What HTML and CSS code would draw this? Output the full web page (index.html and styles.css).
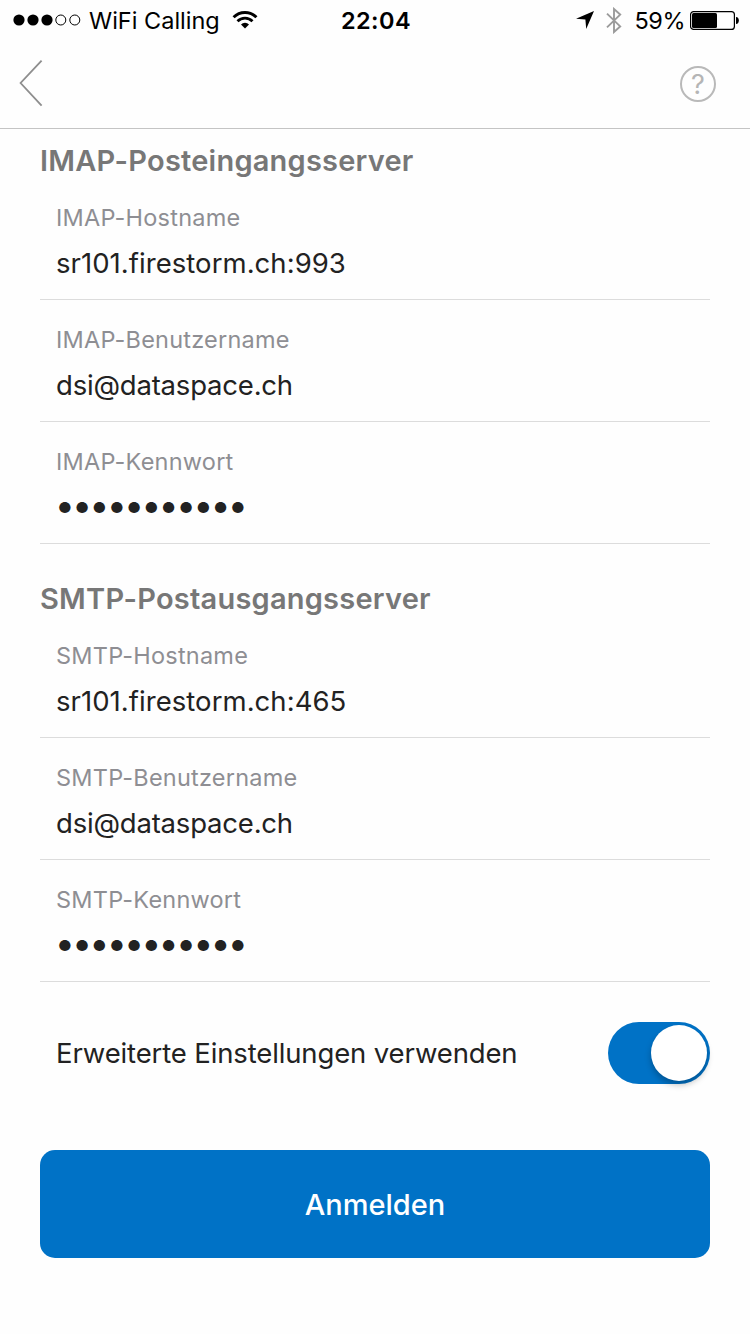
FILE: index.html
```
<!DOCTYPE html>
<html lang="de">
<head>
  <meta charset="UTF-8">
  <meta name="viewport" content="width=device-width, initial-scale=1.0">
  <title>Anmelden</title>
  <link rel="stylesheet" href="styles.css">
</head>

<body>
  <div class="status-bar">
    <div class="status-left">
      <svg class="signal" width="68" height="14" viewBox="0 0 68 14">
        <circle cx="6" cy="7" r="5.6"/>
        <circle cx="20" cy="7" r="5.6"/>
        <circle cx="34" cy="7" r="5.6"/>
        <circle cx="47.8" cy="7" r="5" fill="none" stroke="#000" stroke-width="1"/>
        <circle cx="61.8" cy="7" r="5" fill="none" stroke="#000" stroke-width="1"/>
      </svg>
      <span class="carrier">WiFi Calling</span>
      <svg class="wifi" width="26" height="20" viewBox="0 0 26 20">
        <path d="M1.6 7.2 A16.2 16.2 0 0 1 24.4 7.2" fill="none" stroke="#000" stroke-width="3"/>
        <path d="M5.5 11.2 A10.6 10.6 0 0 1 20.5 11.2" fill="none" stroke="#000" stroke-width="2.8"/>
        <path d="M9 14.4 A5.8 5.8 0 0 1 17 14.4 L13 18.6 Z"/>
      </svg>
    </div>
    <div class="time">22:04</div>
    <div class="status-right">
      <svg class="location" width="18" height="18" viewBox="0 0 18 18">
        <path d="M18 0 L10.2 18 L9.4 8.6 L0 7.8 Z"/>
      </svg>
      <svg class="bluetooth" width="16" height="27" viewBox="0 0 16 27">
        <path d="M1 6.6 L14.2 19.4 L8 25 V2 L14.2 7.6 L1 20.4" fill="none" stroke="#9b9b9b" stroke-width="1.9"/>
      </svg>
      <span class="percent">59%</span>
      <svg class="battery" width="49" height="19" viewBox="0 0 49 19">
        <rect x="0.6" y="0.6" width="43.8" height="17.8" rx="3" fill="none" stroke="#000" stroke-width="1.2"/>
        <rect x="2" y="2" width="25" height="15" rx="1.5"/>
        <path d="M46 6 C49.8 6 49.8 13 46 13 Z"/>
      </svg>
    </div>
  </div>

  <div class="nav-bar">
    <svg class="back" width="24" height="48" viewBox="0 0 24 48">
      <path d="M22.6 0.6 L1.6 23 L22.6 45.6" fill="none" stroke="#8e8e8e" stroke-width="1.8"/>
    </svg>
    <div class="help">?</div>
  </div>

  <div class="container">
    <h2 class="title title-imap">IMAP-Posteingangsserver</h2>
    <div class="field">
      <div class="label">IMAP-Hostname</div>
      <div class="value host">sr101.firestorm.ch:993</div>
    </div>
    <div class="field">
      <div class="label">IMAP-Benutzername</div>
      <div class="value user">dsi@dataspace.ch</div>
    </div>
    <div class="field">
      <div class="label">IMAP-Kennwort</div>
      <div class="value password">●●●●●●●●●●●</div>
    </div>

    <h2 class="title title-smtp">SMTP-Postausgangsserver</h2>
    <div class="field">
      <div class="label">SMTP-Hostname</div>
      <div class="value host">sr101.firestorm.ch:465</div>
    </div>
    <div class="field">
      <div class="label">SMTP-Benutzername</div>
      <div class="value user">dsi@dataspace.ch</div>
    </div>
    <div class="field">
      <div class="label">SMTP-Kennwort</div>
      <div class="value password">●●●●●●●●●●●</div>
    </div>

    <div class="advanced">
      <span class="advanced-text">Erweiterte Einstellungen verwenden</span>
      <div class="toggle"><div class="knob"></div></div>
    </div>

    <button class="login-button">Anmelden</button>
  </div>
</body>
</html>
```
FILE: styles.css
```
* {
  box-sizing: border-box;
}
body {
  margin: 0;
  background: #fefefe;
  color: #222;
  font-family: Inter, "Liberation Sans", sans-serif;
}

/* status bar */
.status-bar {
  display: grid;
  grid-template-columns: 1fr auto 1fr;
  align-items: center;
  height: 40px;
  padding: 0 11px 0 13px;
  color: #000;
  font-size: 23.5px;
}
.status-left, .status-right {
  display: flex;
  align-items: center;
}
.status-right {
  justify-content: flex-end;
}
.carrier {
  margin: 0 12px 0 8px;
}
.time {
  font-weight: 600;
  letter-spacing: 0.4px;
}
.bluetooth {
  margin-left: 12px;
}
.percent {
  margin: 0 5px 0 13px;
  letter-spacing: -0.5px;
}

/* top navigation */
.nav-bar {
  display: flex;
  justify-content: space-between;
  align-items: center;
  height: 89px;
  padding: 0 34px 0 19px;
  border-bottom: 1px solid #c4c4c4;
}
.help {
  width: 36px;
  height: 36px;
  border: 2px solid #b9b9b9;
  border-radius: 50%;
  color: #b5b5b5;
  font-size: 27px;
  line-height: 33px;
  text-align: center;
}

/* form */
.container {
  padding: 15px 40px 0;
}
.title {
  margin: 0;
  color: #777;
  font-size: 29px;
  font-weight: 600;
  line-height: 34px;
  letter-spacing: 0.22px;
}
.title-smtp {
  margin-top: 38px;
}
.field {
  height: 122px;
  padding: 24px 16px 0;
  border-bottom: 1px solid #dcdcdc;
}
.label {
  color: #8e8e93;
  font-size: 23.5px;
  line-height: 32px;
  letter-spacing: 0.22px;
}
.value {
  margin-top: 11px;
  font-size: 27.5px;
  line-height: 36px;
}
.host {
  letter-spacing: 0.05px;
}
.user {
  letter-spacing: -0.2px;
}
.password {
  margin-top: 12px;
  padding-left: 2px;
  font-size: 15px;
  letter-spacing: 3.6px;
}

.advanced {
  display: flex;
  justify-content: space-between;
  align-items: center;
  height: 62px;
  margin-top: 40px;
  padding-left: 16px;
  font-size: 27.5px;
  letter-spacing: -0.14px;
}
.toggle {
  display: flex;
  justify-content: flex-end;
  width: 102px;
  height: 62px;
  padding: 3px;
  border-radius: 31px;
  background: #0072c6;
}
.knob {
  width: 56px;
  height: 56px;
  border-radius: 50%;
  background: #fff;
  box-shadow: 0 4px 6px rgba(0, 0, 0, 0.25);
}
.login-button {
  display: block;
  width: 100%;
  height: 108px;
  margin-top: 66px;
  border: none;
  border-radius: 15px;
  background: #0072c6;
  color: #fff;
  font-family: inherit;
  font-size: 29px;
  font-weight: 500;
}
```
